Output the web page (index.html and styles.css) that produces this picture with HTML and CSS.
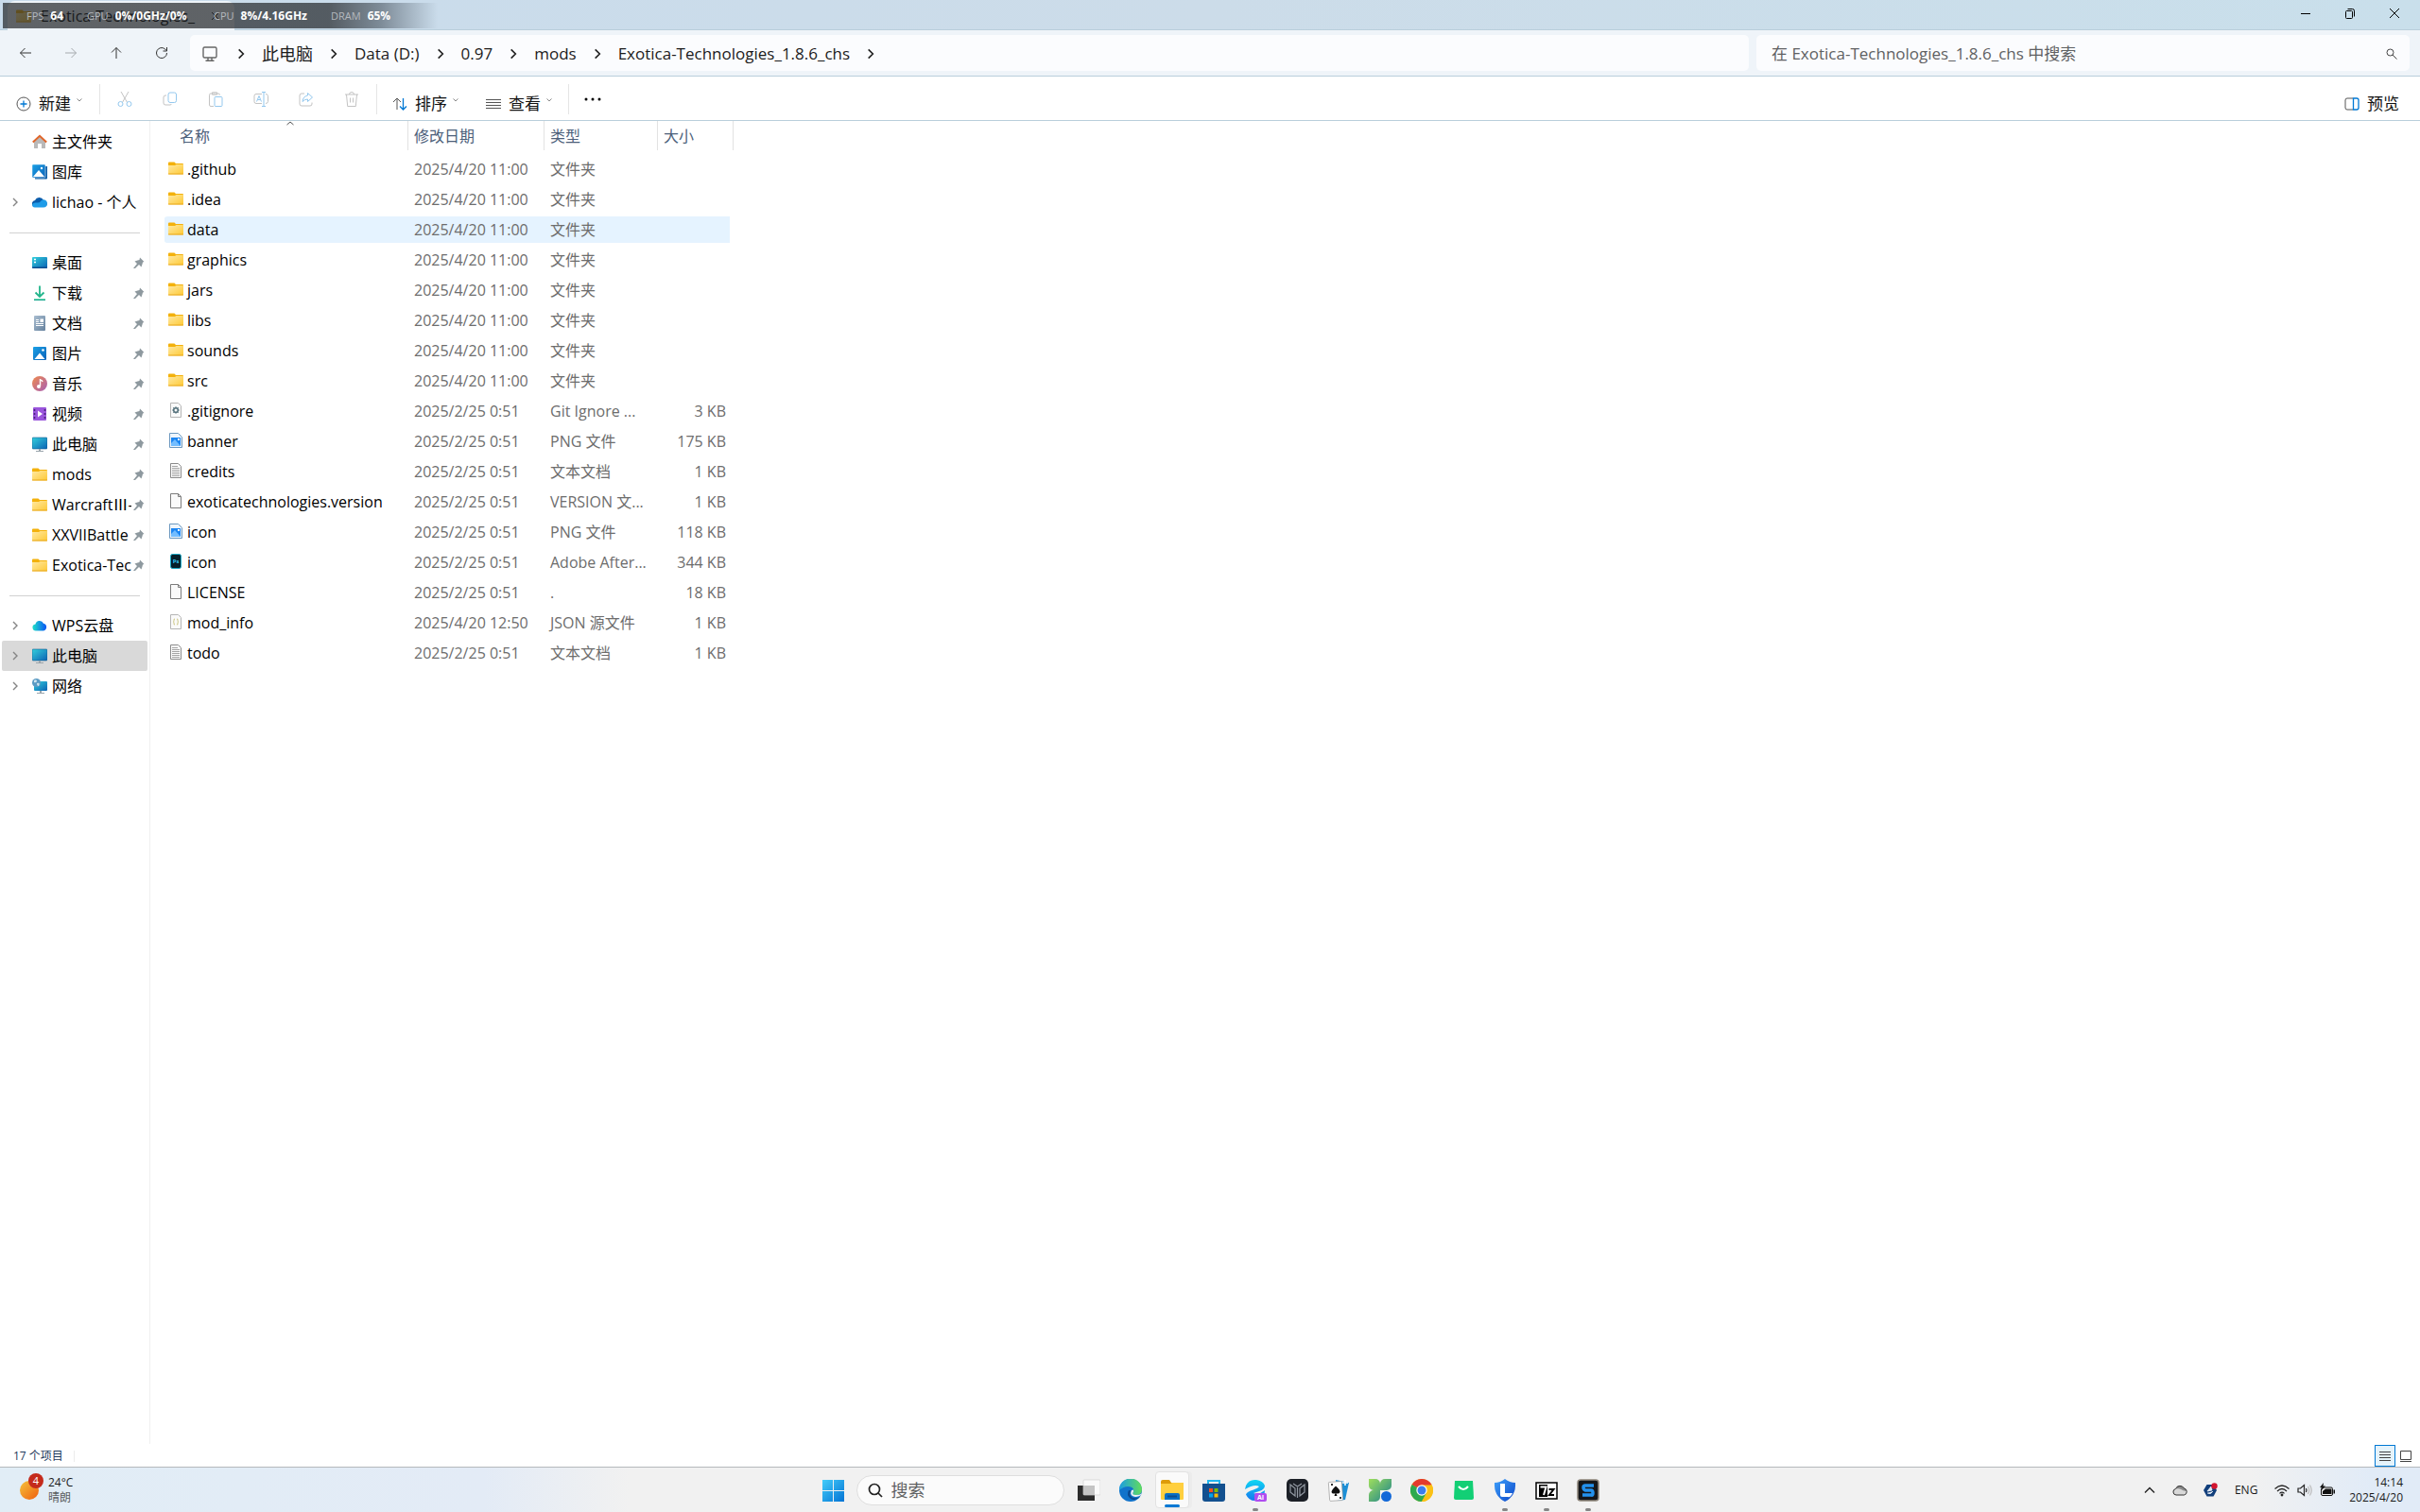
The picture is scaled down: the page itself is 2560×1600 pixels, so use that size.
FILE: index.html
```html
<!DOCTYPE html>
<html lang="zh-CN">
<head>
  <meta charset="UTF-8">
  <title>Exotica-Technologies_1.8.6_chs</title>
  <link rel="stylesheet" href="styles.css">
</head>
<body>
  <!-- 图标定义 -->
  <svg class="defs" width="0" height="0" aria-hidden="true">
    <defs>
      <linearGradient id="gFolder" x1="0" y1="0" x2="1" y2="1"><stop offset="0" stop-color="#ffe9a2"/><stop offset="1" stop-color="#fec935"/></linearGradient>
      <linearGradient id="gScreen" x1="0" y1="0" x2="1" y2="1"><stop offset="0" stop-color="#33d0dc"/><stop offset="1" stop-color="#0b62b4"/></linearGradient>
      <linearGradient id="gBlue" x1="0" y1="0" x2="1" y2="1"><stop offset="0" stop-color="#1ba1e6"/><stop offset="1" stop-color="#0b62b8"/></linearGradient>
      <linearGradient id="gMusic" x1="0" y1="0" x2="1" y2="1"><stop offset="0" stop-color="#f08a4c"/><stop offset="1" stop-color="#a75fb5"/></linearGradient>
      <linearGradient id="gDown" x1="0" y1="0" x2="0" y2="1"><stop offset="0" stop-color="#2fce94"/><stop offset="1" stop-color="#109a8c"/></linearGradient>
      <linearGradient id="gDoc" x1="0" y1="0" x2="1" y2="1"><stop offset="0" stop-color="#a9bdd0"/><stop offset="1" stop-color="#66829e"/></linearGradient>
      <linearGradient id="gWin" x1="0" y1="0" x2="1" y2="1"><stop offset="0" stop-color="#43cdfa"/><stop offset="1" stop-color="#0373d4"/></linearGradient>
      <linearGradient id="gSun" x1="0" y1="0" x2="1" y2="1"><stop offset="0" stop-color="#f5c33b"/><stop offset="1" stop-color="#ef5f10"/></linearGradient>
      <linearGradient id="gEdge" x1="0" y1="0" x2="1" y2="0"><stop offset="0" stop-color="#1b9de2"/><stop offset="1" stop-color="#62dd5b"/></linearGradient>
      <linearGradient id="gClover" x1="0" y1="0" x2="1" y2="1"><stop offset="0" stop-color="#9fdf5d"/><stop offset="1" stop-color="#177f8e"/></linearGradient>
      <linearGradient id="gShield" x1="0" y1="0" x2="1" y2="1"><stop offset="0" stop-color="#3da0fb"/><stop offset="1" stop-color="#0d47c8"/></linearGradient>
      <linearGradient id="gWps" x1="0" y1="0" x2="1" y2="0"><stop offset="0" stop-color="#1fe0c8"/><stop offset="1" stop-color="#0a55f5"/></linearGradient>
      <linearGradient id="gBrowser" x1="0" y1="0" x2="0" y2="1"><stop offset="0" stop-color="#10d8f2"/><stop offset="1" stop-color="#1676f0"/></linearGradient>
    </defs>

    <symbol id="folder" viewBox="0 0 16 16"><path d="M0 2.500a1 1 0 0 1 1-1h5.500l1.500 1.500h7a1 1 0 0 1 1 1v3H0z" fill="#f3b10c"/><path d="M0 5h7l1.500-1H16v9.500a1 1 0 0 1-1 1H1a1 1 0 0 1-1-1z" fill="url(#gFolder)"/><path d="M0 14h16" stroke="#e8a820"/></symbol>
    <symbol id="home" viewBox="0 0 16 16"><path d="M2 7l6-5 6 5v7.500a.5.5 0 0 1-.5.5H10v-5H6v5H2.500a.5.5 0 0 1-.5-.5z" fill="#b9b9b9"/><path d="M.8 8.500L8 1.800l7.200 6.700" fill="none" stroke="#e0662a" stroke-width="2"/></symbol>
    <symbol id="gallery" viewBox="0 0 16 16"><path d="M2 2h14v12.500a1 1 0 0 1-1 1H3z" fill="#0b5ea8"/><rect width="14" height="14" rx="1" fill="url(#gBlue)" stroke="#fff" stroke-width=".5"/><path d="M1 13l6-7 6 7z" fill="#fff"/><circle cx="10" cy="4" r="1.200" fill="#fff"/></symbol>
    <symbol id="onedrive" viewBox="0 0 16 16"><path d="M1 12a3.500 3.500 0 0 1 2-6 5 5 0 0 1 9-.3A4 4 0 0 1 15 12z" fill="#0a5cab"/><path d="M3.500 13.500A3 3 0 0 1 0 11q.5-3 4-2.500 4 .5 5-1.500a3.700 3.700 0 0 1 6.800 2.500q0 4-3.800 4z" fill="#1f9ce8"/></symbol>
    <symbol id="desktop" viewBox="0 0 16 16"><rect y="2" width="16" height="12" rx="1" fill="url(#gScreen)"/><path d="M2 4.500h2M2 7.500h2" stroke="#fff" stroke-width="1.500"/><path d="M0 12.500h16v.5a1 1 0 0 1-1 1H1a1 1 0 0 1-1-1z" fill="#0a4d8f"/></symbol>
    <symbol id="download" viewBox="0 0 16 16"><path d="M8 .5V11.500M3.500 7.500L8 12l4.500-4.500" fill="none" stroke="#21b58b" stroke-width="1.800"/><path d="M2 14.300h12v1.700H2z" fill="url(#gDown)"/></symbol>
    <symbol id="document" viewBox="0 0 16 16"><rect x="2" width="12" height="16" rx="1" fill="url(#gDoc)"/><path d="M4 4.500h3M4 6.500h3M4 8.500h8M4 10.500h8" stroke="#fff"/><path d="M8.500 3.500H12V7H8.500z" fill="#fff"/></symbol>
    <symbol id="picture" viewBox="0 0 16 16"><rect x="1" y="1" width="14" height="14" rx="1" fill="url(#gBlue)"/><path d="M2.500 14L8 7.500l5.500 6.500z" fill="#fff"/><circle cx="11.500" cy="4.500" r="1.300" fill="#fff"/></symbol>
    <symbol id="music" viewBox="0 0 16 16"><circle cx="8" cy="8" r="8" fill="url(#gMusic)"/><path d="M8.500 3v7.500M8.500 4q2 0 2.500 2" fill="none" stroke="#fff" stroke-width="1.400"/><circle cx="7" cy="11" r="2" fill="#fff"/></symbol>
    <symbol id="video" viewBox="0 0 16 16"><rect x="1" y="1" width="14" height="14" rx="1" fill="#9a55dc"/><path d="M2.500 3v11M13.500 3v11" stroke="#4c2380" stroke-width="1.600" stroke-dasharray="2 2"/><path d="M6 4.500v7L11 8z" fill="#fff"/></symbol>
    <symbol id="pc" viewBox="0 0 16 16"><rect y="1" width="16" height="12" rx="1" fill="url(#gScreen)" stroke="#155f91" stroke-width=".6"/><path d="M7 13h2v2h3v1H4v-1h3z" fill="#9aa5ac"/></symbol>
    <symbol id="wps" viewBox="0 0 16 16"><path d="M4.500 13.500A3.500 3.500 0 0 1 3.500 6.500a4.500 4.500 0 0 1 8.500-.8A4 4 0 0 1 12 13.500z" fill="url(#gWps)"/></symbol>
    <symbol id="network" viewBox="0 0 16 16"><rect x="2" y="3" width="14" height="10" rx="1" fill="url(#gScreen)"/><path d="M8 13h2v2h3v1H5v-1h3z" fill="#9aa5ac"/><circle cx="4.500" cy="4.500" r="4.500" fill="#5b9bc4"/><path d="M2 2q3-2 3 1-1 2-3 1zM5 5q4-1 2 3-2 0-2-3z" fill="#cfe4ef"/></symbol>
    <symbol id="pin" viewBox="0 0 12 12"><path d="M7 .5l4.500 4.500-1.500.5-.5 2-1 3-2.500-2.500L1.500 12.500 0 12 4 7 1.500 4.500l3-1 2-.5z" fill="#8e999f"/></symbol>
    <symbol id="chev" viewBox="0 0 12 12"><path d="M4 2l4 4-4 4" fill="none" stroke="currentColor" stroke-width="1.400"/></symbol>
    <symbol id="down" viewBox="0 0 8 8"><path d="M1.500 2.500L4 5l2.500-2.500" fill="none" stroke="#8a8a8a"/></symbol>

    <symbol id="fText" viewBox="0 0 16 16"><path d="M2.500.5h8l3 3v12h-11z" fill="#fafafa" stroke="#8b8b8b"/><path d="M4 3.500h6M4 5.500h8M4 7.500h8M4 9.500h8M4 11.500h8M4 13.500h8" stroke="#a5a5a5"/></symbol>
    <symbol id="fBlank" viewBox="0 0 16 16"><path d="M2.500.5h8l3 3v12h-11zM10.500.5v3h3" fill="#fafafa" stroke="#7c7c7c"/></symbol>
    <symbol id="fGit" viewBox="0 0 16 16"><path d="M2.500.5h8l3 3v12h-11z" fill="#fafafa" stroke="#b5b5b5"/><circle cx="8" cy="8" r="2.300" fill="none" stroke="#55727c" stroke-width="1.600"/><path d="M8 4.200v7.600M4.200 8h7.600M5.300 5.300l5.400 5.400M10.700 5.300l-5.400 5.400" stroke="#55727c" stroke-dasharray="1.300 5 1.300 5"/></symbol>
    <symbol id="fPng" viewBox="0 0 16 16"><path d="M1.500.5h9l4 4v11h-13z" fill="#eef5fb" stroke="#6c98bf"/><path d="M3 5h10v9H3z" fill="#1c86f2"/><path d="M3 11l4-4 6 7H3z" fill="#73bdff"/><path d="M10 6h2v2h-2z" fill="#fff"/></symbol>
    <symbol id="fPs" viewBox="0 0 16 16"><rect x="2.500" y=".5" width="11" height="15" rx="2" fill="#06202b" stroke="#19a9c6"/><text x="8" y="10" text-anchor="middle" font-size="6" font-weight="700" font-family="Open Sans, sans-serif" fill="#35c7f3">Ps</text></symbol>
    <symbol id="fJson" viewBox="0 0 16 16"><path d="M2.500.5h8l3 3v12h-11z" fill="#fafafa" stroke="#b5b5b5"/><path d="M7 5q-1.500 0-1 1.500 0 1-.7 1.500.7.500.7 1.500Q5.500 11 7 11M9 5q1.500 0 1 1.500 0 1 .7 1.500-.7.500-.7 1.500.5 1.500-1 1.500" fill="none" stroke="#c9c27a"/></symbol>
  </svg>

  <div class="window">
    <header class="titlebar">
      <div class="tab">
        <svg class="icon"><use href="#folder"/></svg>
        <span class="tab-title">Exotica-Technologies_</span>
        <svg class="tab-close" viewBox="0 0 10 10"><path d="M1 1l8 8M9 1L1 9" stroke="#222"/></svg>
      </div>
      <div class="monitor">
        <span class="stat stat-fps">FPS <b>64</b></span>
        <span class="stat stat-gpu">GPU <b>0%/0GHz/0%</b></span>
        <span class="stat stat-cpu">CPU <b>8%/4.16GHz</b></span>
        <span class="stat">DRAM <b>65%</b></span>
      </div>
      <div class="window-controls">
        <button aria-label="最小化"><svg viewBox="0 0 12 12"><path d="M1 6.500h10" stroke="#000"/></svg></button>
        <button aria-label="还原"><svg viewBox="0 0 12 12" fill="none" stroke="#000"><rect x="1.500" y="3.500" width="7" height="8" rx="1"/><path d="M3.500 1.500h5a2 2 0 0 1 2 2v6"/></svg></button>
        <button aria-label="关闭"><svg viewBox="0 0 12 12"><path d="M1 1l10 10M11 1L1 11" stroke="#000"/></svg></button>
      </div>
    </header>

    <nav class="navbar">
      <div class="nav-buttons">
        <button aria-label="后退"><svg viewBox="0 0 14 14"><path d="M13 7H1.500M6.500 2l-5 5 5 5"/></svg></button>
        <button aria-label="前进" disabled><svg viewBox="0 0 14 14"><path d="M1 7h11.500M7.500 2l5 5-5 5"/></svg></button>
        <button aria-label="向上"><svg viewBox="0 0 14 14"><path d="M7 13V1.500M2 6.500l5-5 5 5"/></svg></button>
        <button aria-label="刷新"><svg viewBox="0 0 14 14"><path d="M12.500 7A5.500 5.500 0 1 1 10.500 2.800l1.500 1.700M12.500 1v4h-4"/></svg></button>
      </div>
      <div class="breadcrumb">
        <svg class="crumb-pc" viewBox="0 0 18 18" fill="none" stroke="#666" stroke-width="1.400"><rect x="2" y="2" width="14" height="11" rx="1.500"/><path d="M7 13v3M11 13v3M4.500 16.300h9"/></svg>
        <svg class="crumb-sep"><use href="#chev"/></svg>
        <a href="#" class="zh">此电脑</a>
        <svg class="crumb-sep"><use href="#chev"/></svg>
        <a href="#">Data (D:)</a>
        <svg class="crumb-sep"><use href="#chev"/></svg>
        <a href="#">0.97</a>
        <svg class="crumb-sep"><use href="#chev"/></svg>
        <a href="#">mods</a>
        <svg class="crumb-sep"><use href="#chev"/></svg>
        <a href="#">Exotica-Technologies_1.8.6_chs</a>
        <svg class="crumb-sep"><use href="#chev"/></svg>
      </div>
      <label class="search">
        <input type="text" aria-label="搜索" placeholder="在 Exotica-Technologies_1.8.6_chs 中搜索">
        <svg viewBox="0 0 12 12" fill="none" stroke="#444"><circle cx="4.500" cy="4.500" r="3.500"/><path d="M7 7l4.500 4.500"/></svg>
      </label>
    </nav>

    <div class="toolbar">
      <button class="tool tool-new">
        <svg class="tool-icon" viewBox="0 0 16 16" fill="none"><circle cx="8" cy="8" r="7" stroke="#555"/><path d="M8 4.500v7M4.500 8h7" stroke="#0078d4" stroke-width="1.300"/></svg>
        新建<svg class="drop"><use href="#down"/></svg>
      </button>
      <span class="tool-line"></span>
      <div class="tool-group">
        <button disabled aria-label="剪切"><svg viewBox="0 0 16 16" fill="none"><path d="M4 0l6.300 11M12 0L5.700 11" stroke="#c3c3c3"/><circle cx="3.500" cy="13" r="2.500" stroke="#94c8ee"/><circle cx="12.500" cy="13" r="2.500" stroke="#94c8ee"/></svg></button>
        <button disabled aria-label="复制"><svg viewBox="0 0 16 16" fill="none"><path d="M4 4H3a2 2 0 0 0-2 2v6a2 2 0 0 0 2 2h5a2 2 0 0 0 1.500-1" stroke="#c3c3c3"/><rect x="6" y="1" width="8.500" height="10.500" rx="2" stroke="#94c8ee"/></svg></button>
        <button disabled aria-label="粘贴"><svg viewBox="0 0 16 16" fill="none"><path d="M6 15.500H3A1.500 1.500 0 0 1 1.500 14V3.500A1.500 1.500 0 0 1 3 2h8a1.500 1.500 0 0 1 1.500 1.500M4.500.8h5v2.400h-5z" stroke="#c3c3c3"/><rect x="7" y="5.500" width="8" height="10" rx="1" stroke="#94c8ee"/></svg></button>
        <button disabled aria-label="重命名"><svg viewBox="0 0 16 16" fill="none"><path d="M9 2.500H3a2 2 0 0 0-2 2v6a2 2 0 0 0 2 2h6M13 2.500a2.500 2.500 0 0 1 2.500 2v6a2.500 2.500 0 0 1-2.500 2" stroke="#c3c3c3"/><path d="M3.500 10.500L6 4.500l2.500 6M4.500 8.500h3M11 .5v15M9 .5h4M9 15.500h4" stroke="#94c8ee"/></svg></button>
        <button disabled aria-label="共享"><svg viewBox="0 0 16 16" fill="none"><path d="M6 2H3a2 2 0 0 0-2 2v9a2 2 0 0 0 2 2h9a2 2 0 0 0 2-2v-1.500" stroke="#c3c3c3"/><path d="M9.500 1.500l5 4.500-5 4.500V8Q6 8 4 10.500 4.500 5 9.500 4z" stroke="#94c8ee"/></svg></button>
        <button disabled aria-label="删除"><svg viewBox="0 0 16 16" fill="none"><path d="M1 3h14M5.500 3a2.500 2.500 0 0 1 5 0M2.500 3l1.200 12.500h8.600L13.500 3M6.500 6.500v5M9.500 6.500v5" stroke="#c3c3c3"/></svg></button>
      </div>
      <span class="tool-line"></span>
      <button class="tool tool-sort">
        <svg class="tool-icon" viewBox="0 0 16 16" fill="none"><path d="M5 14V2M1 6l4-4 4 4" stroke="#555"/><path d="M11.500 2v12M8 10.500l3.500 3.500 3.500-3.500" stroke="#0078d4" stroke-width="1.300"/></svg>
        排序<svg class="drop"><use href="#down"/></svg>
      </button>
      <button class="tool tool-view">
        <svg class="tool-icon" viewBox="0 0 16 16"><path d="M0 3.500h16M0 6.500h16M0 9.500h16M0 12.500h16" stroke="#555"/></svg>
        查看<svg class="drop"><use href="#down"/></svg>
      </button>
      <span class="tool-line"></span>
      <button class="tool-more" aria-label="更多"><svg viewBox="0 0 18 4"><circle cx="2" cy="2" r="1.500"/><circle cx="9" cy="2" r="1.500"/><circle cx="16" cy="2" r="1.500"/></svg></button>
      <button class="tool tool-preview">
        <svg class="tool-icon" viewBox="0 0 16 16" fill="none"><path d="M9 2H3a2 2 0 0 0-2 2v8a2 2 0 0 0 2 2h6" stroke="#555"/><path d="M9.500 2H13a2 2 0 0 1 2 2v8a2 2 0 0 1-2 2H9.500z" stroke="#0078d4" stroke-width="1.300"/></svg>
        预览
      </button>
    </div>

    <main class="content">
      <aside class="sidebar">
        <ul>
          <li><svg class="icon"><use href="#home"/></svg><span class="label">主文件夹</span></li>
          <li><svg class="icon"><use href="#gallery"/></svg><span class="label">图库</span></li>
          <li class="expandable"><svg class="arrow"><use href="#chev"/></svg><svg class="icon"><use href="#onedrive"/></svg><span class="label">lichao - 个人</span></li>
        </ul>
        <hr>
        <ul class="pinned">
          <li><svg class="icon"><use href="#desktop"/></svg><span class="label">桌面</span><svg class="pin"><use href="#pin"/></svg></li>
          <li><svg class="icon"><use href="#download"/></svg><span class="label">下载</span><svg class="pin"><use href="#pin"/></svg></li>
          <li><svg class="icon"><use href="#document"/></svg><span class="label">文档</span><svg class="pin"><use href="#pin"/></svg></li>
          <li><svg class="icon"><use href="#picture"/></svg><span class="label">图片</span><svg class="pin"><use href="#pin"/></svg></li>
          <li><svg class="icon"><use href="#music"/></svg><span class="label">音乐</span><svg class="pin"><use href="#pin"/></svg></li>
          <li><svg class="icon"><use href="#video"/></svg><span class="label">视频</span><svg class="pin"><use href="#pin"/></svg></li>
          <li><svg class="icon"><use href="#pc"/></svg><span class="label">此电脑</span><svg class="pin"><use href="#pin"/></svg></li>
          <li><svg class="icon"><use href="#folder"/></svg><span class="label">mods</span><svg class="pin"><use href="#pin"/></svg></li>
          <li><svg class="icon"><use href="#folder"/></svg><span class="label">WarcraftⅢ-</span><svg class="pin"><use href="#pin"/></svg></li>
          <li><svg class="icon"><use href="#folder"/></svg><span class="label">XXVIIBattle</span><svg class="pin"><use href="#pin"/></svg></li>
          <li><svg class="icon"><use href="#folder"/></svg><span class="label">Exotica-Tec</span><svg class="pin"><use href="#pin"/></svg></li>
        </ul>
        <hr>
        <ul>
          <li class="expandable"><svg class="arrow"><use href="#chev"/></svg><svg class="icon"><use href="#wps"/></svg><span class="label">WPS云盘</span></li>
          <li class="expandable selected"><svg class="arrow"><use href="#chev"/></svg><svg class="icon"><use href="#pc"/></svg><span class="label">此电脑</span></li>
          <li class="expandable"><svg class="arrow"><use href="#chev"/></svg><svg class="icon"><use href="#network"/></svg><span class="label">网络</span></li>
        </ul>
      </aside>

      <section class="files">
        <table>
          <colgroup><col class="col-name"><col class="col-date"><col class="col-type"><col class="col-size"></colgroup>
          <thead>
            <tr>
              <th><button class="name-head">名称<svg class="sort-mark" viewBox="0 0 8 5"><path d="M.5 4L4 1l3.500 3" fill="none" stroke="#555"/></svg></button></th>
              <th><button>修改日期</button></th>
              <th><button>类型</button></th>
              <th><button>大小</button></th>
            </tr>
          </thead>
          <tbody>
            <tr><td><svg class="icon"><use href="#folder"/></svg>.github</td><td>2025/4/20 11:00</td><td>文件夹</td><td></td></tr>
            <tr><td><svg class="icon"><use href="#folder"/></svg>.idea</td><td>2025/4/20 11:00</td><td>文件夹</td><td></td></tr>
            <tr class="hovered"><td><svg class="icon"><use href="#folder"/></svg>data</td><td>2025/4/20 11:00</td><td>文件夹</td><td></td></tr>
            <tr><td><svg class="icon"><use href="#folder"/></svg>graphics</td><td>2025/4/20 11:00</td><td>文件夹</td><td></td></tr>
            <tr><td><svg class="icon"><use href="#folder"/></svg>jars</td><td>2025/4/20 11:00</td><td>文件夹</td><td></td></tr>
            <tr><td><svg class="icon"><use href="#folder"/></svg>libs</td><td>2025/4/20 11:00</td><td>文件夹</td><td></td></tr>
            <tr><td><svg class="icon"><use href="#folder"/></svg>sounds</td><td>2025/4/20 11:00</td><td>文件夹</td><td></td></tr>
            <tr><td><svg class="icon"><use href="#folder"/></svg>src</td><td>2025/4/20 11:00</td><td>文件夹</td><td></td></tr>
            <tr><td><svg class="icon"><use href="#fGit"/></svg>.gitignore</td><td>2025/2/25 0:51</td><td>Git Ignore ...</td><td>3 KB</td></tr>
            <tr><td><svg class="icon"><use href="#fPng"/></svg>banner</td><td>2025/2/25 0:51</td><td>PNG 文件</td><td>175 KB</td></tr>
            <tr><td><svg class="icon"><use href="#fText"/></svg>credits</td><td>2025/2/25 0:51</td><td>文本文档</td><td>1 KB</td></tr>
            <tr><td><svg class="icon"><use href="#fBlank"/></svg>exoticatechnologies.version</td><td>2025/2/25 0:51</td><td>VERSION 文...</td><td>1 KB</td></tr>
            <tr><td><svg class="icon"><use href="#fPng"/></svg>icon</td><td>2025/2/25 0:51</td><td>PNG 文件</td><td>118 KB</td></tr>
            <tr><td><svg class="icon"><use href="#fPs"/></svg>icon</td><td>2025/2/25 0:51</td><td>Adobe After...</td><td>344 KB</td></tr>
            <tr><td><svg class="icon"><use href="#fBlank"/></svg>LICENSE</td><td>2025/2/25 0:51</td><td>.</td><td>18 KB</td></tr>
            <tr><td><svg class="icon"><use href="#fJson"/></svg>mod_info</td><td>2025/4/20 12:50</td><td>JSON 源文件</td><td>1 KB</td></tr>
            <tr><td><svg class="icon"><use href="#fText"/></svg>todo</td><td>2025/2/25 0:51</td><td>文本文档</td><td>1 KB</td></tr>
          </tbody>
        </table>
      </section>
    </main>

    <footer class="statusbar">
      <span class="count">17 个项目</span>
      <div class="view-switch">
        <button class="active" aria-label="详细信息"><svg viewBox="0 0 12 12"><path d="M0 1.500h12M0 4.500h12M0 7.500h12M0 10.500h12" stroke="#444"/></svg></button>
        <button aria-label="大图标"><svg viewBox="0 0 12 12" fill="none" stroke="#444"><path d="M.5.500h11v9H.5zM0 11.500h12"/></svg></button>
      </div>
    </footer>
  </div>

  <div class="taskbar">
    <button class="weather">
      <span class="weather-icon">
        <svg viewBox="0 0 20 20"><circle cx="10" cy="10" r="10" fill="url(#gSun)"/></svg>
        <span class="badge">4</span>
      </span>
      <span class="weather-text"><span>24°C</span><span class="sky">晴朗</span></span>
    </button>

    <div class="apps">
      <button class="app" aria-label="开始"><svg viewBox="0 0 24 24"><path d="M1 1h11v11H1zM13 1h11v11H13zM1 13h11v11H1zM13 13h11v11H13z" fill="url(#gWin)"/></svg></button>
      <label class="task-search">
        <svg viewBox="0 0 16 16" fill="none" stroke="#222" stroke-width="1.700"><circle cx="7" cy="7" r="5.500"/><path d="M11 11l4 4"/></svg>
        <input type="text" aria-label="搜索" placeholder="搜索">
      </label>
      <button class="app" aria-label="任务视图"><svg viewBox="0 0 24 24"><path d="M0 7h18v16H0z" fill="#2b2b2b"/><rect x="6" y="1" width="18" height="16" rx="1" fill="#fafafa" stroke="#d0d0d0" stroke-width=".7"/><path d="M6 7h12v10H6z" fill="#c4c4c4"/></svg></button>
      <button class="app" aria-label="Edge"><svg viewBox="0 0 24 24"><circle cx="12" cy="12" r="12" fill="#1173cb"/><path d="M0 12A12 12 0 0 1 24 11q0 6-6.500 6-4 0-3-2.500 2-3-1-5.500Q7 6 0 12z" fill="url(#gEdge)"/><path d="M10 12q-3 5 2 9 5 3 10-2-7 3-10-1-2-3 1-5.500z" fill="#0b4a91"/><path d="M13 12q-2 4 1 6 4 2 8.500-.5l1-2q-2 1.500-6 1.500-4 0-3-2.500 1-1 .5-3z" fill="#f1f1f1"/></svg></button>
      <button class="app current" aria-label="文件资源管理器"><svg viewBox="0 0 24 24"><path d="M0 3a2 2 0 0 1 2-2h7l2 3h13v5H0z" fill="#dd9b09"/><path d="M0 5h10l2-1h12v17a1 1 0 0 1-1 1H1a1 1 0 0 1-1-1z" fill="#ffcf3f"/><path d="M4 22v-5a2 2 0 0 1 2-2h12a2 2 0 0 1 2 2v5z" fill="#0b6fc4"/><path d="M7 18.500h10" stroke="#0a4d91" stroke-width="2"/></svg></button>
      <button class="app" aria-label="Microsoft Store"><svg viewBox="0 0 24 24"><path d="M6 6V2h12v4" fill="none" stroke="#22b8f0" stroke-width="2"/><path d="M0 5h24v16a3 3 0 0 1-3 3H3a3 3 0 0 1-3-3z" fill="#13508f"/><path d="M7 10h4v4H7z" fill="#f25022"/><path d="M12.500 10h4v4h-4z" fill="#7fba00"/><path d="M7 15.500h4v4H7z" fill="#00a4ef"/><path d="M12.500 15.500h4v4h-4z" fill="#ffb900"/></svg></button>
      <button class="app running" aria-label="浏览器"><svg viewBox="0 0 24 24"><path d="M2 7Q5 0 13 1q7 1 9 6 0 4-6 6l-6 2q6 2 12-3 0 8-7 10.500Q6 25 2 16.500q1-3 8-5 5-2 6-3.500-5-3-15 3z" fill="url(#gBrowser)"/><rect x="11" y="15" width="13" height="9" rx="2" fill="#b04df0"/><text x="17.500" y="22" text-anchor="middle" font-size="7" font-weight="700" font-family="Open Sans, sans-serif" fill="#fff">AI</text></svg></button>
      <button class="app" aria-label="游戏平台"><svg viewBox="0 0 24 24"><rect x="1" y="0" width="23" height="24" rx="5" fill="#1c2027"/><path d="M5 6v8l5 4V10zM20 6v8l-5 4V10zM8 5l4.500 3L17 5M12.500 9v11" fill="none" stroke="#9299a3" stroke-width="1.200"/></svg></button>
      <button class="app" aria-label="纸牌"><svg viewBox="0 0 24 24"><path d="M9 1l14 3-4 18-8 1z" fill="#1c8fd6"/><rect x="2" y="3" width="14" height="20" rx="1" fill="#fff" stroke="#999" stroke-width=".7" transform="rotate(-4 9 13)"/><path d="M9 7.500q5 4 4.500 6.500-1.500 2.500-4 1l1 3h-3l1-3q-3 1.500-4-1 0-2.500 4.500-6.500z" fill="#111"/><path d="M4 5h2v2H4zM13 19h2v2h-2z" fill="#333"/><path d="M19 1v6M16 4h6" stroke="#fff" stroke-width="1.500"/></svg></button>
      <button class="app" aria-label="四叶草"><svg viewBox="0 0 24 24"><path d="M0 0h7a5 5 0 0 1 5 5v7H5a5 5 0 0 1-5-5zM24 0v7a5 5 0 0 1-5 5h-7V5a5 5 0 0 1 5-5zM0 24v-7a5 5 0 0 1 5-5h7v7a5 5 0 0 1-5 5z" fill="url(#gClover)"/><circle cx="18.500" cy="18.500" r="5.500" fill="#1168d8"/></svg></button>
      <button class="app" aria-label="Chrome"><svg viewBox="0 0 24 24"><circle cx="12" cy="12" r="12" fill="#fbc116"/><path d="M12 12L1.600 6A12 12 0 0 1 22.400 6z" fill="#e33b2e"/><path d="M12 12L1.600 6A12 12 0 0 0 12 24l5-9z" fill="#2da94f"/><path d="M12 6.500h10.700A12 12 0 0 1 12 24l5-9z" fill="#fbc116"/><circle cx="12" cy="12" r="5.700" fill="#fff"/><circle cx="12" cy="12" r="4.500" fill="#3b7ded"/></svg></button>
      <button class="app" aria-label="应用商店"><svg viewBox="0 0 24 24"><path d="M3 2h19l1 18a2 2 0 0 1-2 2H4a2 2 0 0 1-2-2z" fill="#12cf75"/><path d="M7 8q5 6 10 0" fill="none" stroke="#fff" stroke-width="2"/></svg></button>
      <button class="app running" aria-label="电脑管家"><svg viewBox="0 0 24 24"><path d="M12 0q5 4 11 4 1 14-11 20Q0 18 1 4q6 0 11-4z" fill="url(#gShield)"/><path d="M7 5h5v10h8q-2 5-5 4H9q-2 0-2-2z" fill="#fff"/></svg></button>
      <button class="app running" aria-label="7-Zip"><svg viewBox="0 0 24 24"><path d="M1 4h22v17H1z" fill="#fff" stroke="#000" stroke-width="1.500"/><path d="M4 6h9v13H4z" fill="#000"/><path d="M5.500 8.500h6L9 17" fill="none" stroke="#fff" stroke-width="2"/><path d="M14.500 11h5l-4.500 6h5" fill="none" stroke="#000" stroke-width="2"/></svg></button>
      <button class="app running" aria-label="启动器"><svg viewBox="0 0 24 24"><rect x="1" y="1" width="22" height="22" rx="3" fill="#15171a" stroke="#8d857a" stroke-width="1.500"/><path d="M18 7H9q-2 0-2 2t2 3h6q2 0 2 3t-2 2H6" fill="none" stroke="#2391ed" stroke-width="3.500"/></svg></button>
    </div>

    <div class="tray">
      <button class="tray-btn" aria-label="显示隐藏的图标"><svg viewBox="0 0 16 16"><path d="M3 10.500l5-5 5 5" fill="none" stroke="#222" stroke-width="1.400"/></svg></button>
      <button class="tray-btn" aria-label="OneDrive"><svg viewBox="0 0 16 16"><path d="M4 13a3.300 3.300 0 0 1-.5-6.500 5 5 0 0 1 9-.5A3.600 3.600 0 0 1 12.500 13z" fill="#d8d8d8"/><path d="M1 9q1-2.500 3-2.500 4-1 7 1.500 2 1 4 .5-1-2.500-3-3Q10.500 3 8 3 5 3 4 6z" fill="#8b8b8b"/><path d="M4 13a3.300 3.300 0 0 1-.5-6.500 5 5 0 0 1 9-.5A3.600 3.600 0 0 1 12.500 13z" fill="none" stroke="#333"/></svg></button>
      <button class="tray-btn" aria-label="安全工具"><svg viewBox="0 0 16 16"><path d="M4.500 2h7L15 8l-3.500 6.500h-7L1 8z" fill="#123f7c"/><path d="M5 9l4-5 1 4zM5 11q4 2 6-2" fill="#dfe9f5" stroke="#fff" stroke-width=".7"/><circle cx="12.500" cy="3.500" r="3.200" fill="#d3152f"/></svg></button>
      <button class="lang">ENG</button>
      <button class="quick" aria-label="网络、音量和电池">
        <svg viewBox="0 0 16 16" fill="none" stroke="#222" stroke-width="1.200"><path d="M.5 6.500q7.500-7 15 0M3 9q5-5 10 0M5.500 11.300q2.500-2.500 5 0"/><circle cx="8" cy="13" r=".8" fill="#222"/></svg>
        <svg viewBox="0 0 16 16" fill="none" stroke="#222" stroke-width="1.200"><path d="M1 6h2.500L7.500 2.500v11L3.500 10H1z"/><path d="M9.500 6q1 2 0 4"/><path d="M11.500 4q2.500 4 0 8M13.500 2.500q3.500 5.500 0 11" stroke="#bbb"/></svg>
        <svg viewBox="0 0 16 16"><rect x="1.500" y="5" width="12" height="8.500" rx="1.500" fill="#f1f1f1" stroke="#111"/><path d="M3 12V9l3-2.500h6.500V12z" fill="#111"/><path d="M14.500 7.500v4H16v-4zM4 0L0 5h2.500L1.500 8.500 6 3.500H3.500z" fill="#111"/></svg>
      </button>
      <button class="clock"><span>14:14</span><span>2025/4/20</span></button>
    </div>
  </div>
</body>
</html>
```
FILE: styles.css
```css
* {
  box-sizing: border-box;
}

body {
  margin: 0;
  height: 100vh;
  display: flex;
  flex-direction: column;
  overflow: hidden;
  background: #fff;
  color: #000;
  font-family: 'Open Sans', 'Noto Sans CJK SC', sans-serif;
  font-size: 16px;
  line-height: 24px;
}

button {
  padding: 0;
  border: none;
  background: none;
  font: inherit;
  color: inherit;
}

svg {
  display: block;
  flex: none;
}

ul {
  list-style: none;
  margin: 0;
  padding: 0;
}

.defs {
  position: absolute;
}

.icon {
  width: 16px;
  height: 16px;
}

.window {
  flex: 1;
  min-height: 0;
  display: flex;
  flex-direction: column;
}

/* 标题栏 */
.titlebar {
  position: relative;
  height: 32px;
  display: flex;
  justify-content: space-between;
  padding: 1px 4px 0 8px;
  background: linear-gradient(90deg, #c9dcec, #ccdce9 50%, #c9dfeb);
  border-bottom: 1px solid #b9cedb;
}

.tab {
  width: 240px;
  height: 31px;
  display: flex;
  align-items: center;
  gap: 10px;
  padding: 0 15px 0 9px;
  border-radius: 8px 8px 0 0;
  background: #eef4f9;
}

.tab-title {
  flex: 1;
}

.tab-close {
  width: 10px;
  height: 10px;
}

/* 性能监控浮层 */
.monitor {
  position: absolute;
  left: 3px;
  top: 3px;
  width: 460px;
  height: 27px;
  display: flex;
  align-items: center;
  padding-left: 25px;
  background: linear-gradient(90deg, rgba(34, 37, 40, .7) 0, rgba(34, 37, 40, .7) 75%, rgba(50, 60, 70, .5) 87%, rgba(60, 70, 80, 0));
  color: #b5b9be;
  font-size: 11px;
}

.stat {
  display: flex;
  gap: 7px;
  white-space: nowrap;
}

.stat b {
  color: #fff;
  font-size: 12px;
}

.stat-fps {
  width: 64px;
}

.stat-gpu {
  width: 134px;
}

.stat-cpu {
  width: 124px;
}

.window-controls {
  display: flex;
}

.window-controls button {
  width: 47px;
  height: 26px;
  display: flex;
  align-items: center;
  justify-content: center;
}

.window-controls svg {
  width: 12px;
  height: 12px;
}

/* 导航栏 */
.navbar {
  height: 49px;
  display: flex;
  align-items: center;
  padding: 0 11px 0 3px;
  background: #eff4f9;
  border-bottom: 1px solid #b9cedb;
}

.nav-buttons {
  display: flex;
  width: 198px;
}

.nav-buttons button {
  width: 48px;
  height: 36px;
  display: flex;
  align-items: center;
  justify-content: center;
}

.nav-buttons svg {
  width: 14px;
  height: 14px;
  fill: none;
  stroke: #333;
}

.nav-buttons button:disabled svg {
  stroke: #a5a9ad;
}

.breadcrumb {
  flex: 1;
  height: 38px;
  display: flex;
  align-items: center;
  padding: 2px 0 0 12px;
  border-radius: 5px;
  background: #fbfcfe;
  font-size: 17px;
}

.breadcrumb a {
  color: #1b1b1b;
  text-decoration: none;
}

.breadcrumb .zh {
  font-size: 18px;
}

.crumb-pc {
  width: 18px;
  height: 18px;
  margin-right: 2px;
}

.crumb-sep {
  width: 44px;
  height: 14px;
  color: #222;
}

.search {
  width: 691px;
  height: 38px;
  display: flex;
  align-items: center;
  margin-left: 8px;
  padding: 2px 13px 0 16px;
  border-radius: 5px;
  background: #fbfcfe;
}

.search input,
.task-search input {
  flex: 1;
  min-width: 0;
  padding: 0;
  border: none;
  outline: none;
  background: none;
  font: inherit;
  font-size: 17px;
}

input::placeholder {
  color: #5f6163;
  opacity: 1;
}

.search svg {
  width: 12px;
  height: 12px;
}

/* 工具栏 */
.toolbar {
  height: 47px;
  display: flex;
  align-items: center;
  padding: 1px 22px 0 17px;
  background: #fff;
  border-bottom: 1px solid #b9cedb;
  font-size: 17px;
}

.tool {
  display: flex;
  align-items: center;
  gap: 8px;
  height: 32px;
  padding-top: 10px;
  color: #111;
}

.tool-icon {
  width: 16px;
  height: 16px;
}

.drop {
  width: 8px;
  height: 8px;
  margin: -8px 0 0 -3px;
}

.tool-new {
  width: 88px;
}

.tool-line {
  width: 1px;
  height: 32px;
  background: #e5e5e5;
}

.tool-group {
  display: flex;
  padding: 0 2px;
}

.tool-group button {
  width: 48px;
  display: flex;
  justify-content: center;
}

.tool-group svg {
  width: 16px;
  height: 16px;
}

.tool-sort {
  width: 99px;
  margin-left: 16px;
}

.tool-view {
  width: 87px;
}

.tool-more {
  width: 49px;
  display: flex;
  justify-content: center;
}

.tool-more svg {
  width: 18px;
  height: 4px;
}

.tool-preview {
  margin-left: auto;
}

/* 主体 */
.content {
  flex: 1;
  min-height: 0;
  display: flex;
}

.sidebar {
  width: 159px;
  padding-top: 6px;
  border-right: 1px solid #f0f0f0;
}

.sidebar li {
  height: 32px;
  display: flex;
  align-items: center;
  gap: 5px;
  margin: 0 2px;
  padding-left: 32px;
  border-radius: 2px;
  white-space: nowrap;
}

.sidebar .expandable {
  padding-left: 8px;
}

.sidebar .selected {
  background: #d9d9d9;
}

.label {
  flex: 1;
  overflow: hidden;
}

.pinned li {
  gap: 2px;
  margin-right: 5px;
}

.pinned .label {
  padding-left: 3px;
}

.arrow {
  width: 12px;
  height: 12px;
  margin-right: 7px;
  color: #858585;
}

.pin {
  width: 12px;
  height: 12px;
}

.sidebar hr {
  height: 1px;
  margin: 16px 10px 15px;
  border: none;
  background: #d2d2d2;
}

/* 文件列表 */
.files {
  flex: 1;
  padding-left: 15px;
}

.files table {
  width: 602px;
  table-layout: fixed;
  border-collapse: separate;
  border-spacing: 0;
  color: #6d6d6d;
}

.col-name {
  width: 258px;
}

.col-date {
  width: 144px;
}

.col-type {
  width: 120px;
}

.col-size {
  width: 80px;
}

.files th {
  height: 35px;
  padding: 0;
  vertical-align: top;
  font-weight: 400;
}

.files th button {
  width: 100%;
  height: 31px;
  padding-left: 6px;
  border-right: 1px solid #e2e2e2;
  color: #4c607a;
  text-align: left;
}

.files th .name-head {
  position: relative;
  padding-left: 16px;
}

.sort-mark {
  position: absolute;
  top: 0;
  left: 50%;
  width: 8px;
  height: 5px;
}

.files td {
  height: 32px;
  padding: 0 0 0 6px;
  border: solid transparent;
  border-width: 2px 0;
  background-clip: padding-box;
  white-space: nowrap;
}

.files td:first-child {
  padding-left: 4px;
  border-radius: 4px 0 0 4px;
  color: #000;
}

.files td:last-child {
  padding-right: 4px;
  border-right-width: 4px;
  border-radius: 0 4px 4px 0;
  text-align: right;
}

.files td .icon {
  display: inline-block;
  margin-right: 4px;
  vertical-align: -1px;
}

.hovered td {
  background-color: #e5f3ff;
}

/* 状态栏 */
.statusbar {
  height: 24px;
  display: flex;
  align-items: center;
  justify-content: space-between;
  padding: 1px 4px 0 14px;
  color: #1e395b;
  font-size: 12px;
}

.count {
  line-height: 12px;
  padding-right: 11px;
  border-right: 1px solid #ececec;
}

.view-switch {
  display: flex;
}

.view-switch button {
  width: 22px;
  height: 23px;
  display: flex;
  align-items: center;
  justify-content: center;
}

.view-switch .active {
  border: 1px solid #0078d4;
  background: #e5f3fb;
}

.view-switch svg {
  width: 12px;
  height: 12px;
}

/* 任务栏 */
.taskbar {
  height: 48px;
  display: grid;
  grid-template-columns: 1fr auto 1fr;
  border-top: 1px solid #b5b9bc;
  background: linear-gradient(90deg, #e1edf6 0, #e3ebf6 20%, #f1f1f1 26%, #f1f1f1 93%, #e1ebf7 98%);
}

.weather {
  justify-self: start;
  display: flex;
  align-items: center;
  gap: 10px;
  padding-left: 21px;
  color: #1a1a1a;
  font-size: 12px;
  line-height: 16px;
  text-align: left;
}

.weather-icon {
  position: relative;
}

.weather-icon svg {
  width: 20px;
  height: 20px;
}

.badge {
  position: absolute;
  top: -8px;
  left: 9px;
  width: 16px;
  height: 16px;
  border-radius: 50%;
  background: #c42b1c;
  color: #fff;
  font-size: 11px;
  text-align: center;
}

.weather-text,
.clock {
  display: flex;
  flex-direction: column;
}

.sky {
  color: #5a5d60;
}

.apps {
  display: flex;
  align-items: center;
}

.app {
  position: relative;
  width: 44px;
  height: 44px;
  display: flex;
  align-items: center;
  justify-content: center;
}

.app svg {
  width: 24px;
  height: 24px;
}

.current {
  width: 36px;
  height: 39px;
  margin: 0 4px;
  border: 1px solid #e2e2e2;
  border-radius: 4px;
  background: #fafafa;
  box-shadow: 3px 0 0 #ececec;
}

.current::after,
.running::after {
  content: '';
  position: absolute;
  bottom: 0;
  left: 50%;
  width: 6px;
  height: 3px;
  border-radius: 2px;
  background: #858585;
  transform: translateX(-50%);
}

.current::after {
  width: 16px;
  background: #0078d4;
}

.task-search {
  width: 220px;
  height: 32px;
  display: flex;
  align-items: center;
  gap: 9px;
  margin: 0 4px 0 3px;
  padding: 0 11px;
  border: 1px solid #dedede;
  border-radius: 16px;
  background: #fbfbfb;
}

.task-search svg {
  width: 16px;
  height: 16px;
}

.task-search input {
  font-size: 18px;
}

.tray {
  justify-self: end;
  display: flex;
  align-items: center;
  padding-right: 18px;
  color: #1a1a1a;
  font-size: 12px;
  line-height: 16px;
}

.tray-btn {
  width: 32px;
  display: flex;
  justify-content: center;
}

.tray svg {
  width: 16px;
  height: 16px;
}

.lang {
  width: 44px;
}

.quick {
  display: flex;
  gap: 8px;
  padding: 0 15px 0 8px;
}

.clock {
  align-items: flex-end;
}
```
